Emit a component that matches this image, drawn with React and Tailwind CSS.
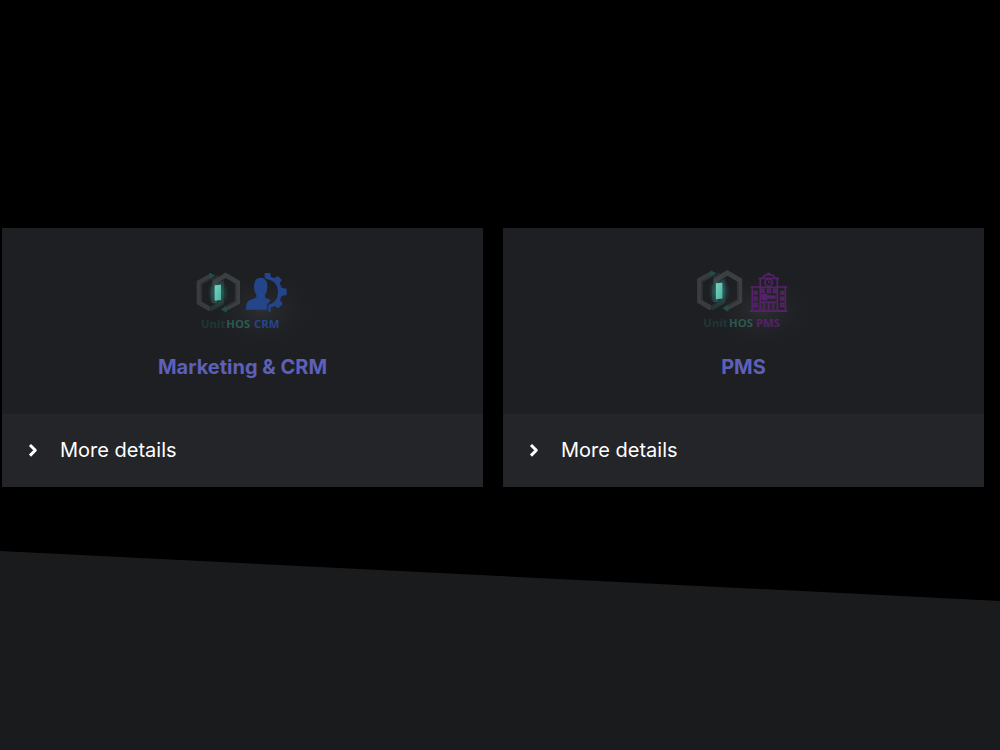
import React from "react";

function HexMark() {
  return (
    <g>
      <defs>
        <radialGradient id="core-glow">
          <stop offset="0" stopColor="#2fa08f" stopOpacity="0.7" />
          <stop offset="1" stopColor="#1f6b60" stopOpacity="0" />
        </radialGradient>
        <linearGradient id="core" x1="0" y1="0" x2="1" y2="1">
          <stop offset="0" stopColor="#7fd0c0" />
          <stop offset="1" stopColor="#48b5a4" />
        </linearGradient>
      </defs>
      <path d="M82 45 L42 67 V128 L76 148" fill="none" stroke="#393c3f" strokeWidth="14" />
      <path d="M82 61 L102 49" stroke="#2a2d30" strokeWidth="12" />
      <path d="M118 148 L158 127 V67 L122 46 L89 66 V130" fill="none" stroke="#3c3f42" strokeWidth="14" />
      <path d="M122 141 L152 124 V72" fill="none" stroke="#2f3235" strokeWidth="5" />
      <path d="M49 124 V71 L80 54" fill="none" stroke="#2e3134" strokeWidth="5" />
      <path d="M76 148 L110 129 V72 L84 86 V126" fill="none" stroke="#2a3536" strokeWidth="13" />
      <path d="M72 39 L91 46 L74 56 Z" fill="#1d4f4b" />
      <path d="M107 148 L125 140 V158 Z" fill="#1d4f4b" />
      <ellipse cx="99" cy="98" rx="32" ry="42" fill="url(#core-glow)" />
      <path d="M89 76 L108 74 V120 L89 122 Z" fill="url(#core)" />
    </g>
  );
}

function PersonGear() {
  return (
    <g fill="#24458a">
      <path d="M183 149 Q182 125 195 120 L214 113 V104 Q207 96 207 79 Q207 53 227 53 Q247 53 247 79 Q247 96 240 104 V113 L257 120 L246 134 L247 149 Z" />
      <path
        fillRule="evenodd"
        d="M239 39 H256 L258 51 L269 55 L278 48 L291 60 L284 70 L290 83 L305 86 V105 L290 108 L285 120 L293 132 L280 145 L269 138 L257 143 V155 H250 V135 Q279 126 279 96 Q279 63 247 58 L239 55 Z"
      />
    </g>
  );
}

function HotelFront() {
  return (
    <g fill="none" stroke="#552269" strokeWidth="5">
      <path d="M195 153 H307" strokeWidth="6" />
      <path d="M202 151 V81 H225 M301 151 V81 H278 M197 81 H228 M275 81 H306" />
      <path d="M226 151 V55 M277 151 V55 M228 82 H275 M221 55 H282" />
      <path d="M234 53 Q236 44 251 43 Q267 44 269 53 M246 41 H256" />
      <circle cx="251" cy="68" r="11" />
      <path d="M251 61 V69 L257 65" strokeWidth="3" />
      <path d="M230 88 H237 V97 H230 Z M248 88 H256 V97 H248 Z M266 88 H273 V97 H266 Z" />
      <circle cx="239" cy="111" r="8" fill="#552269" />
      <path d="M244 111 H272" strokeWidth="10" />
      <path d="M229 127 H274 M237 129 V151 M251 129 V151 M265 129 V151" />
      <path d="M208 95 H215 V102 H208 Z M208 112 H215 V120 H208 Z M208 130 H215 V139 H208 Z M288 95 H295 V102 H288 Z M288 112 H295 V120 H288 Z M288 130 H295 V139 H288 Z" />
    </g>
  );
}

function Logo({ product }) {
  const crm = product === "CRM";
  return (
    <svg
      className="block h-20 w-[120px] overflow-visible font-['Open_Sans',sans-serif] text-[34px] font-bold"
      viewBox={crm ? "-6 0 360 240" : "-3 0 360 240"}
      role="img"
      aria-label={"Unit HOS " + product}
    >
      <defs>
        <radialGradient id="halo">
          <stop offset="0" stopColor="#2d2e32" />
          <stop offset="1" stopColor="#1e1f23" stopOpacity="0" />
        </radialGradient>
      </defs>
      <ellipse cx="230" cy="150" rx="165" ry="120" fill="url(#halo)" />
      {crm ? (
        <HexMark />
      ) : (
        <g transform="translate(0 -9) scale(1.04)">
          <HexMark />
        </g>
      )}
      {crm ? <PersonGear /> : <HotelFront />}
      <text x={crm ? 48 : 55} y={crm ? 204 : 201} fill="#1f3735">Unit</text>
      <text x={crm ? 124 : 132} y={crm ? 204 : 201} fill="#2c5951">HOS</text>
      <text x={crm ? 207 : 213} y={crm ? 204 : 201} fill={crm ? "#24458a" : "#552269"}>{product}</text>
    </svg>
  );
}

function Card({ product, title }) {
  return (
    <article className="bg-[#1e1f23]">
      <div className="flex flex-col items-center pt-8 pb-8">
        <Logo product={product} />
        <h2 className="mt-3 text-xl leading-[30px] font-bold text-[#5c60b8]">{title}</h2>
      </div>
      <button type="button" className="flex w-full items-center gap-5 bg-[#242529] px-[22px] py-5 text-left text-xl leading-[33px] text-white">
        <svg className="size-4" viewBox="0 0 16 16" fill="none" stroke="currentColor" strokeWidth="3" aria-hidden="true">
          <path d="M6 2 L11.3 7.3 L6 12.6" strokeLinejoin="round" />
        </svg>
        More details
      </button>
    </article>
  );
}

export default function App() {
  return (
    <div className="min-h-screen bg-black font-['Inter',sans-serif]">
      <main className="pt-[228px]">
        <div className="grid grid-cols-2 gap-5 pr-4 pl-0.5">
          <Card product="CRM" title="Marketing & CRM" />
          <Card product="PMS" title="PMS" />
        </div>
        <section className="mt-16 h-[197px] bg-[#1a1b1c] [clip-path:polygon(0_0,100%_50px,100%_100%,0_100%)]" />
      </main>
      <footer className="h-0.5 bg-[#1b191f]" />
    </div>
  );
}
